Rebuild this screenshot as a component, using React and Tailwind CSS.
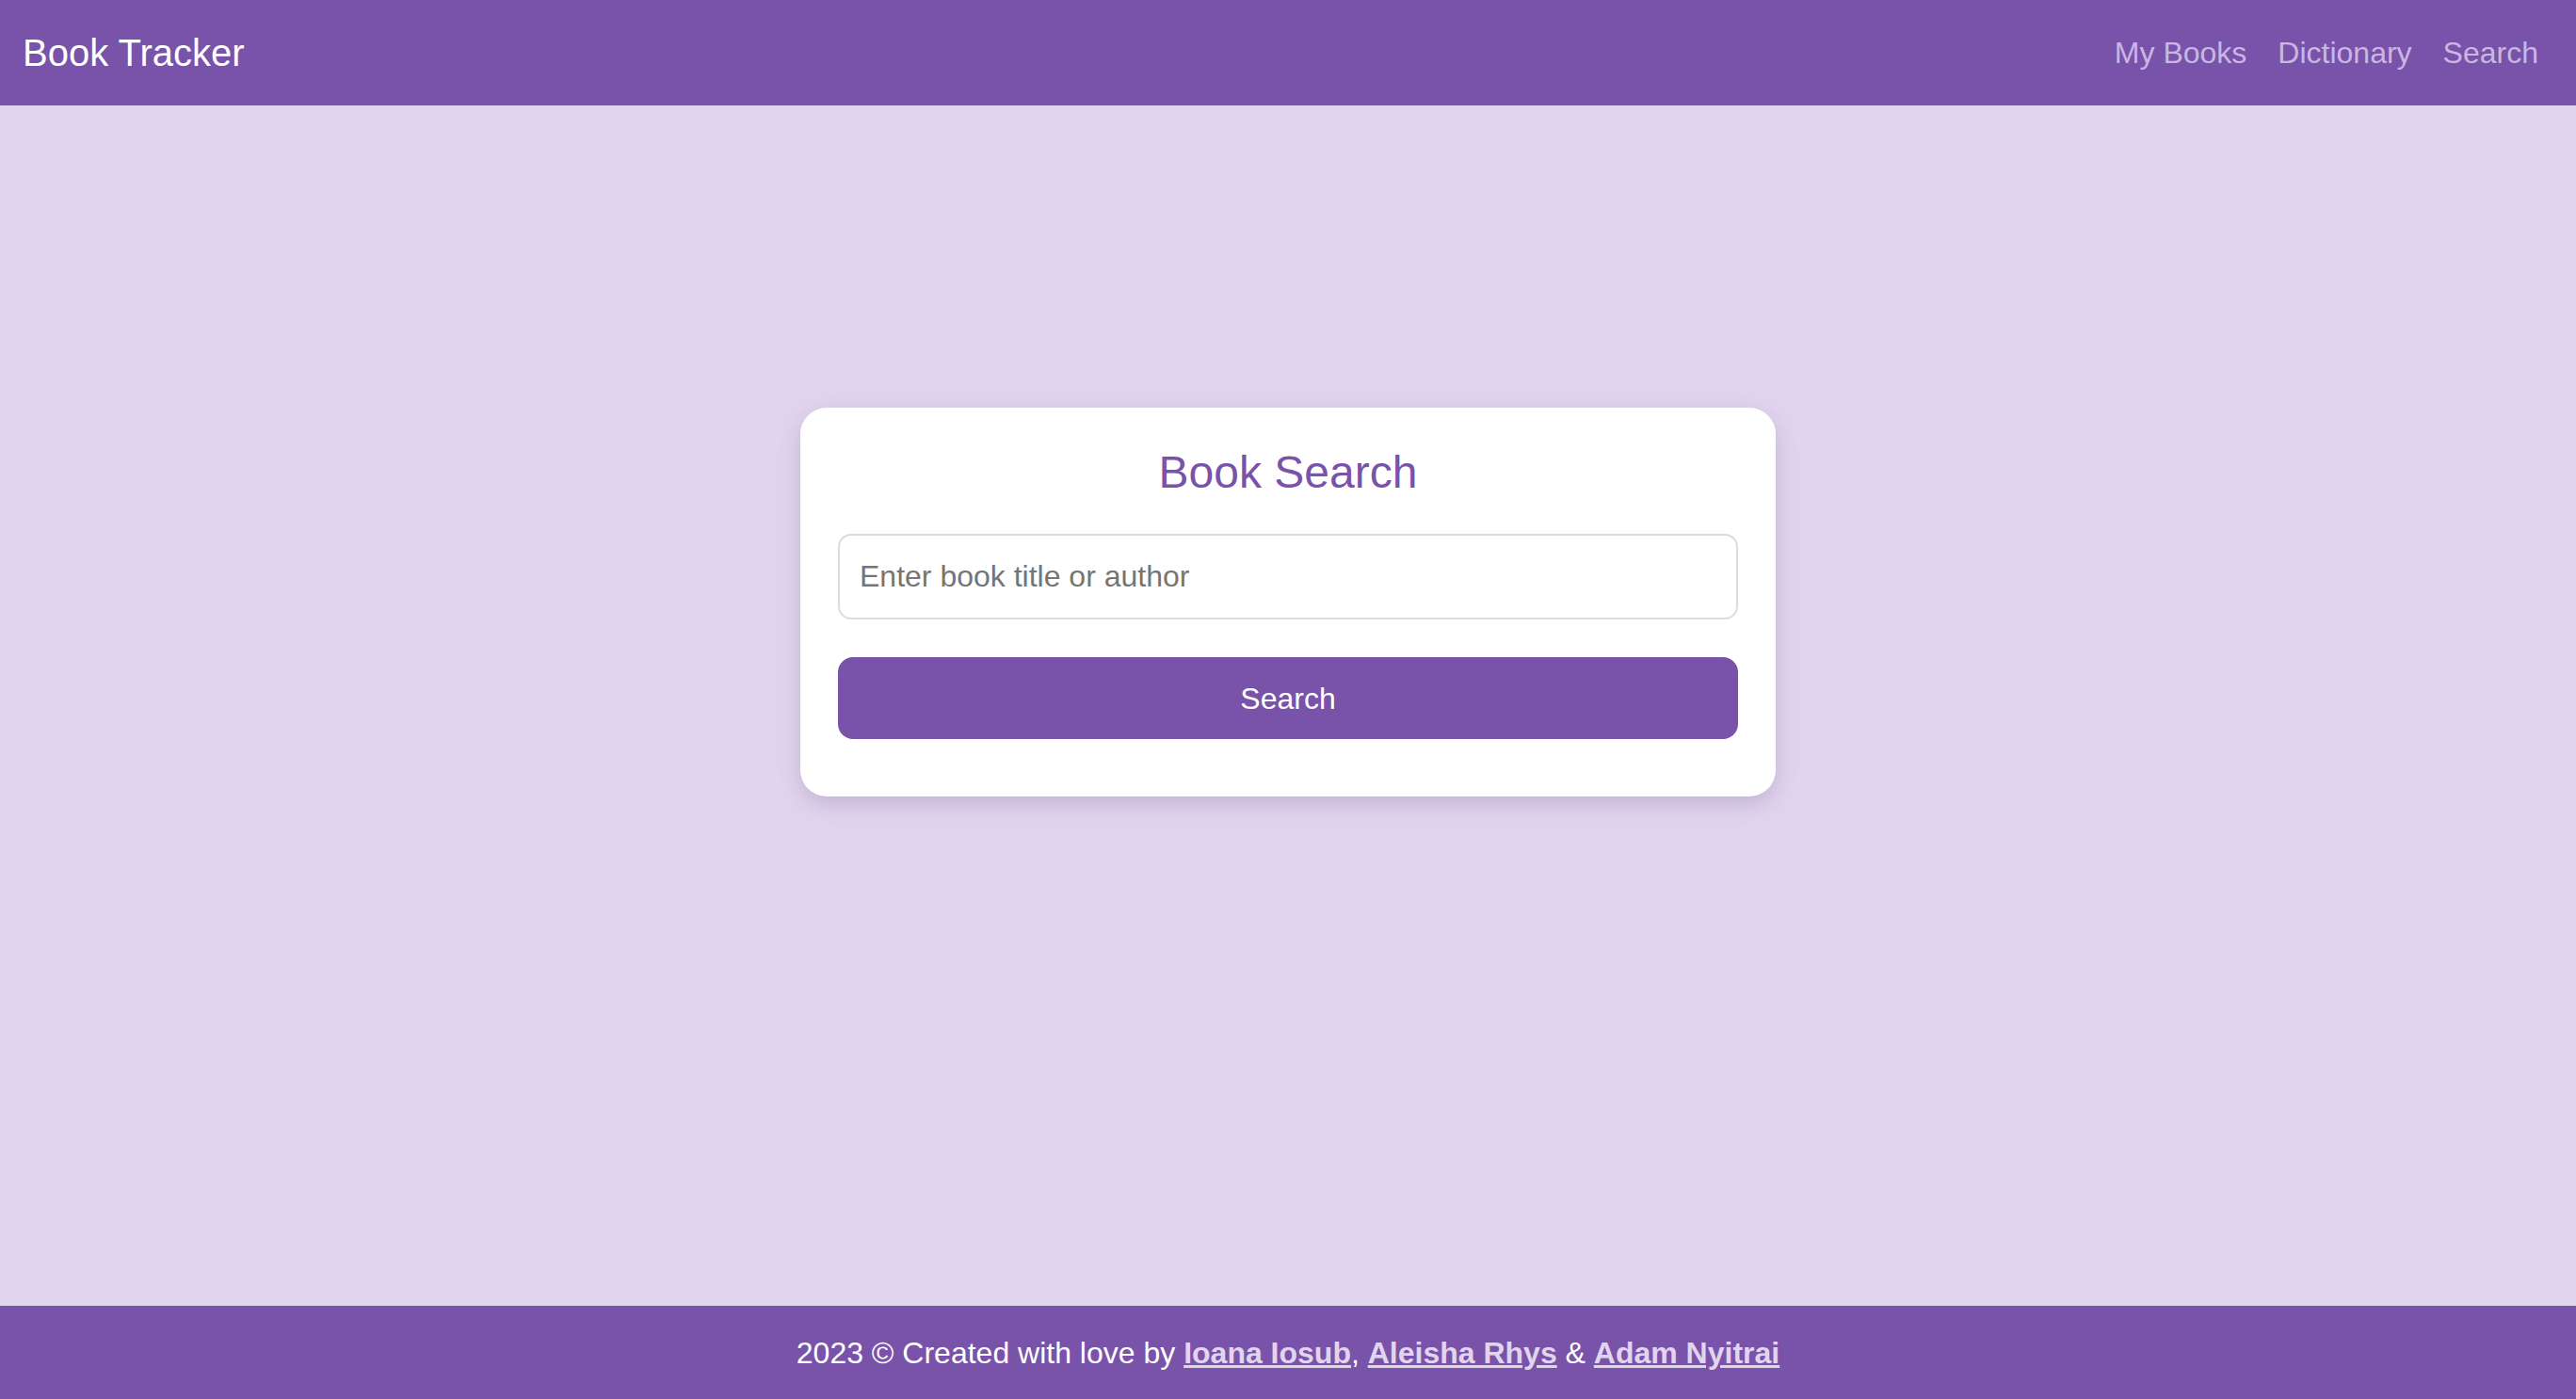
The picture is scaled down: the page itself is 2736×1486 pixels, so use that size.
export default function App() {
  return (
    <div className="min-h-screen flex flex-col bg-[#e1d5ee] font-['Liberation_Sans',Arial,sans-serif]">
      {/* Navbar */}
      <nav className="h-[112px] shrink-0 bg-[#7952a9] flex items-center justify-between pl-[24px] pr-[40px]">
        <a href="#" className="text-white text-[40px] leading-none">Book Tracker</a>
        <div className="flex items-center gap-[33px] text-[32px] text-[#c9b6e4]">
          <a href="#">My Books</a>
          <a href="#">Dictionary</a>
          <a href="#">Search</a>
        </div>
      </nav>

      {/* Main */}
      <main className="flex-1 flex justify-center pt-[321px]">
        <div className="w-[1036px] h-fit bg-white rounded-[28px] px-[40px] pt-[40px] pb-[61px] shadow-[0_8px_24px_rgba(60,30,100,0.18)]">
          <h1 className="text-center text-[48px] leading-[58px] text-[#7952a9] mb-[36px]">Book Search</h1>
          <input
            type="text"
            placeholder="Enter book title or author"
            className="w-full h-[91px] border-2 border-[#dcdcdc] rounded-[14px] px-[21px] text-[32px] text-[#333] placeholder:text-[#757575] outline-none"
          />
          <button className="mt-[40px] w-full h-[87px] rounded-[16px] bg-[#7952a9] text-white text-[32px]">
            Search
          </button>
        </div>
      </main>

      {/* Footer */}
      <footer className="h-[99px] shrink-0 bg-[#7952a9] flex items-center justify-center text-white text-[32px]">
        <p>
          2023 © Created with love by{" "}
          <a href="#" className="font-bold underline text-[#e1d5ee]">Ioana Iosub</a>,{" "}
          <a href="#" className="font-bold underline text-[#e1d5ee]">Aleisha Rhys</a> &amp;{" "}
          <a href="#" className="font-bold underline text-[#e1d5ee]">Adam Nyitrai</a>
        </p>
      </footer>
    </div>
  );
}
